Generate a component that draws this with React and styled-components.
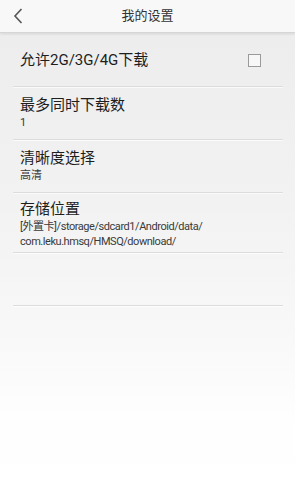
import React from "react";
import styled, { createGlobalStyle } from "styled-components";

const Global = createGlobalStyle`
  html, body { margin: 0; padding: 0; }
  body {
    width: 295px;
    height: 500px;
    overflow: hidden;
    font-family: Roboto, "Noto Sans CJK SC", sans-serif;
    background: #ffffff;
  }
`;

const Page = styled.div`
  width: 295px;
  height: 500px;
  display: flex;
  flex-direction: column;
  background: linear-gradient(to bottom, #f7f7f7 0px, #f7f7f7 33px, #ededed 34px, #f2f2f2 200px, #f8f8f8 330px, #fefefe 420px, #ffffff 500px);
`;

const Header = styled.header`
  height: 32px;
  flex: 0 0 32px;
  position: relative;
  display: flex;
  align-items: center;
  justify-content: center;
  background: #f8f8f8;
  border-bottom: 1px solid #d6d6d6;
  box-shadow: 0 1px 2px rgba(0, 0, 0, 0.12);
`;

const Back = styled.button`
  position: absolute;
  left: 10px;
  top: 6px;
  width: 16px;
  height: 20px;
  padding: 0;
  border: 0;
  background: transparent;
  display: flex;
  align-items: center;
  justify-content: center;
`;

const Title = styled.h1`
  margin: 0 0 1px;
  font-size: 13px;
  font-weight: 400;
  color: #333;
  line-height: 16px;
`;

const List = styled.div`
  display: flex;
  flex-direction: column;
  padding-top: 1px;
`;

const Row = styled.div`
  margin: 0 12px 0 13px;
  padding: ${(p) => p.$pad || "0"} 0 0 7px;
  min-height: ${(p) => p.$h}px;
  box-sizing: border-box;
  display: flex;
  align-items: ${(p) => (p.$top ? "flex-start" : "center")};
  border-bottom: 1px solid #dcdcdc;
  box-shadow: 0 1px 0 rgba(255, 255, 255, 0.7);
`;

const Texts = styled.div`
  flex: 1;
  display: flex;
  flex-direction: column;
`;

const Label = styled.div`
  font-size: 15px;
  line-height: 19px;
  color: #1e1e1e;
`;

const Sub = styled.div`
  font-size: 11px;
  line-height: 14px;
  color: #3a3a3a;
  margin-top: 1px;
`;

const Path = styled.div`
  font-size: 11px;
  letter-spacing: -0.45px;
  line-height: 15px;
  color: #3a3a3a;
`;

const Check = styled.span`
  width: 11px;
  height: 11px;
  border: 1.5px solid #9a9a9a;
  background: #f7f7f7;
  margin-right: 22px;
  flex: 0 0 auto;
`;

export default function App() {
  return (
    <Page>
      <Global />
      <Header>
        <Back aria-label="back">
          <svg width="10" height="16" viewBox="0 0 10 16">
            <path d="M8.5 1 L2 8 L8.5 15" fill="none" stroke="#555" strokeWidth="1.6" />
          </svg>
        </Back>
        <Title>我的设置</Title>
      </Header>
      <List>
        <Row $h={53}>
          <Texts>
            <Label>允许2G/3G/4G下载</Label>
          </Texts>
          <Check />
        </Row>
        <Row $h={53} $top $pad="9px">
          <Texts>
            <Label>最多同时下载数</Label>
            <Sub>1</Sub>
          </Texts>
        </Row>
        <Row $h={53} $top $pad="9px">
          <Texts>
            <Label>清晰度选择</Label>
            <Sub>高清</Sub>
          </Texts>
        </Row>
        <Row $h={60} $top $pad="7px">
          <Texts>
            <Label>存储位置</Label>
            <Path>[外置卡]/storage/sdcard1/Android/data/</Path>
            <Path>com.leku.hmsq/HMSQ/download/</Path>
          </Texts>
        </Row>
        <Row $h={53} />
      </List>
    </Page>
  );
}
